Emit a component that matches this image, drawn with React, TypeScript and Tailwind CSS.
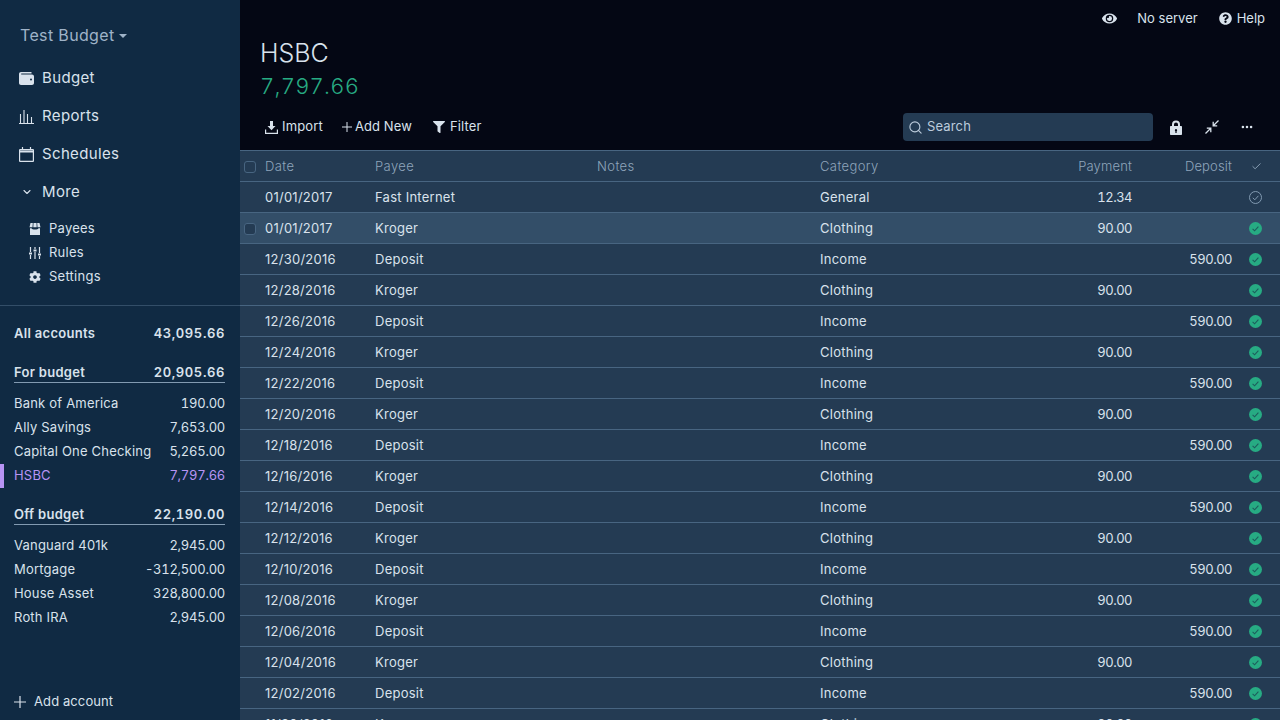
import { ChevronDown, Search, Check, MoreHorizontal } from 'lucide-react';
import { FaEye, FaQuestionCircle, FaFilter, FaCog } from 'react-icons/fa';

const font = { fontFamily: 'Inter, sans-serif' };

const rows: [string, string, string, string, string, boolean][] = [
    ['01/01/2017', 'Fast Internet', 'General', '12.34', '', false],
    ['01/01/2017', 'Kroger', 'Clothing', '90.00', '', true],
    ['12/30/2016', 'Deposit', 'Income', '', '590.00', true],
    ['12/28/2016', 'Kroger', 'Clothing', '90.00', '', true],
    ['12/26/2016', 'Deposit', 'Income', '', '590.00', true],
    ['12/24/2016', 'Kroger', 'Clothing', '90.00', '', true],
    ['12/22/2016', 'Deposit', 'Income', '', '590.00', true],
    ['12/20/2016', 'Kroger', 'Clothing', '90.00', '', true],
    ['12/18/2016', 'Deposit', 'Income', '', '590.00', true],
    ['12/16/2016', 'Kroger', 'Clothing', '90.00', '', true],
    ['12/14/2016', 'Deposit', 'Income', '', '590.00', true],
    ['12/12/2016', 'Kroger', 'Clothing', '90.00', '', true],
    ['12/10/2016', 'Deposit', 'Income', '', '590.00', true],
    ['12/08/2016', 'Kroger', 'Clothing', '90.00', '', true],
    ['12/06/2016', 'Deposit', 'Income', '', '590.00', true],
    ['12/04/2016', 'Kroger', 'Clothing', '90.00', '', true],
    ['12/02/2016', 'Deposit', 'Income', '', '590.00', true],
    ['11/30/2016', 'Kroger', 'Clothing', '90.00', '', true],
];

const WalletIcon = () => (
    <svg width="15" height="13" viewBox="0 0 15 13" fill="currentColor">
        <path d="M2 0h10.500v1.500H2.500c-.6 0-.6 1 0 1H13c1.100 0 2 .9 2 2V11c0 1.100-.9 2-2 2H2c-1.100 0-2-.9-2-2V2C0 .9.900 0 2 0z" />
        <circle cx="12" cy="7.500" r="1" fill="#102a43" />
    </svg>
);

const ReportsIcon = () => (
    <svg width="15" height="15" viewBox="0 0 15 15" fill="none" stroke="currentColor" strokeWidth="1.100">
        <path d="M0 14.500h15M1.500 14V5M5 14V1M8.500 14V5M12.500 14V8" />
    </svg>
);

const CalendarIcon = () => (
    <svg width="15" height="15" viewBox="0 0 15 15" fill="none" stroke="currentColor" strokeWidth="1.200">
        <rect x="0.600" y="2.600" width="13.800" height="11.800" rx="0.500" />
        <path d="M0.600 4.500h13.800" strokeWidth="2" />
        <path d="M3.500 0v3M11.500 0v3" />
    </svg>
);

const StoreIcon = () => (
    <svg width="12" height="12" viewBox="0 0 12 12" fill="currentColor">
        <path d="M1.500 0h2.300l-.3 4.200H0.500zM4.500 0h3l.2 4.200H4.300zM8.200 0h2.300l1 4.200h-3z" />
        <path d="M1 5.200h1.500c0 1.700 7 1.700 7 0H11V12H1z" />
    </svg>
);

const RulesIcon = () => (
    <svg width="12" height="12" viewBox="0 0 12 12" fill="none" stroke="currentColor" strokeWidth="1.200">
        <path d="M1.500 0v5M1.500 8v4M6 0v2M6 5v7M10.500 0v6M10.500 9v3" />
        <path d="M0 6.500h3M4.500 3.500h3M9 7.500h3" strokeWidth="1.800" />
    </svg>
);

const ImportIcon = () => (
    <svg width="13" height="13" viewBox="0 0 13 13" fill="currentColor">
        <path d="M5 0h3v5h2.500l-4 4.200-4-4.200H5z" />
        <path d="M0 8.500h1.200v3.200h10.600V8.500H13V13H0z" />
    </svg>
);

const CollapseIcon = () => (
    <svg width="14" height="14" viewBox="0 0 14 14" fill="none" stroke="currentColor" strokeWidth="1.300">
        <path d="M13.500 0.500L8.500 5.500M8.200 1.800V5.800H12.200" />
        <path d="M0.500 13.500L5.500 8.500M1.800 8.200H5.800V12.200" />
    </svg>
);

const LockIcon = () => (
    <svg width="14" height="15" viewBox="0 0 14 15" fill="currentColor">
        <path fillRule="evenodd" d="M3 6V4.500a4 4 0 0 1 8 0V6h1c.6 0 1 .4 1 1v7c0 .6-.4 1-1 1H2c-.6 0-1-.4-1-1V7c0-.6.400-1 1-1zm2 0h4V4.500a2 2 0 0 0-4 0zm2 3a1.200 1.200 0 0 0-.6 2.200V13h1.200v-1.800A1.200 1.200 0 0 0 7 9z" />
    </svg>
);

const PlusIcon = ({ size }: { size: number }) => (
    <svg width={size} height={size} viewBox="0 0 12 12" fill="none" stroke="currentColor" strokeWidth="1.200">
        <path d="M6 0v12M0 6h12" />
    </svg>
);

const NavItem = ({ icon, label }: { icon: React.ReactNode; label: string }) => (
    <div className="flex items-center h-[38px] pl-[19px] text-[15px] text-[#d9e2ec] tracking-[0.35px]">
        <span className="w-[15px] flex justify-center shrink-0">{icon}</span>
        <span className="ml-2">{label}</span>
    </div>
);

const SubItem = ({ icon, label }: { icon: React.ReactNode; label: string }) => (
    <div className="flex items-center h-6 pl-[29px] text-[13px] text-[#d9e2ec] tracking-[0.25px]">
        <span className="w-3 flex justify-center shrink-0">{icon}</span>
        <span className="ml-2">{label}</span>
    </div>
);

const Account = ({ name, value, active }: { name: string; value: string; active?: boolean }) => (
    <div className={`relative flex justify-between items-center h-6 pl-3.5 pr-[15px] text-[13px] tracking-[0.2px] ${active ? 'text-[#b794f4]' : 'text-[#d9e2ec]'}`}>
        {active && <div className="absolute left-0 top-0 bottom-0 w-1 bg-[#b794f4]"></div>}
        <span>{name}</span>
        <span className="tabular-nums tracking-[-0.25px]">{value}</span>
    </div>
);

const Group = ({ name, value }: { name: string; value: string }) => (
    <div className="mt-[17px] ml-3.5 mr-[15px] h-[20px] flex justify-between items-center border-b border-[#829ab1] text-[13px] font-semibold text-[#d9e2ec] tracking-[0.3px]">
        <span>{name}</span>
        <span className="tabular-nums tracking-[0.6px]">{value}</span>
    </div>
);

const Sidebar = () => (
    <div className="w-[240px] shrink-0 h-[720px] bg-[#102a43] flex flex-col">
        <div className="flex items-center h-[59px] shrink-0 pl-5 pt-[11px] text-[16px] text-[#9fb3c8] tracking-[0.35px]">
            Test Budget
            <svg width="8" height="4" viewBox="0 0 8 4" fill="currentColor" className="ml-[4px] mt-[1px]"><path d="M0 0h8L4 4z" /></svg>
        </div>
        <div>
            <NavItem icon={<WalletIcon />} label="Budget" />
            <NavItem icon={<ReportsIcon />} label="Reports" />
            <NavItem icon={<CalendarIcon />} label="Schedules" />
            <NavItem icon={<ChevronDown size={12} strokeWidth={2.2} />} label="More" />
        </div>
        <div className="pt-[6px] pb-[16px] border-b border-[#334e68]">
            <SubItem icon={<StoreIcon />} label="Payees" />
            <SubItem icon={<RulesIcon />} label="Rules" />
            <SubItem icon={<FaCog size={12} />} label="Settings" />
        </div>
        <div className="flex justify-between items-center h-6 mt-4 pl-3.5 pr-[15px] text-[13px] font-semibold text-[#d9e2ec] tracking-[0.3px]">
            <span>All accounts</span>
            <span className="tabular-nums tracking-[0.6px]">43,095.66</span>
        </div>
        <Group name="For budget" value="20,905.66" />
        <div className="mt-[9px]">
            <Account name="Bank of America" value="190.00" />
            <Account name="Ally Savings" value="7,653.00" />
            <Account name="Capital One Checking" value="5,265.00" />
            <Account name="HSBC" value="7,797.66" active />
        </div>
        <Group name="Off budget" value="22,190.00" />
        <div className="mt-[9px]">
            <Account name="Vanguard 401k" value="2,945.00" />
            <Account name="Mortgage" value="-312,500.00" />
            <Account name="House Asset" value="328,800.00" />
            <Account name="Roth IRA" value="2,945.00" />
        </div>
        <div className="mt-auto h-[36px] flex items-center pl-3.5 text-[13px] text-[#d9e2ec] tracking-[0.1px]">
            <PlusIcon size={12} />
            <span className="ml-2">Add account</span>
        </div>
    </div>
);

const Row = ({ row, hover }: { row: (typeof rows)[number]; hover: boolean }) => (
    <div className={`flex items-center h-[31px] pt-px shrink-0 border-b border-[#486581] text-[13px] text-[#d9e2ec] tracking-[0.25px] ${hover ? 'bg-[#334e68]' : ''}`}>
        <div className="w-[25px] pl-[4px] shrink-0">
            {hover && <div className="w-3 h-3 rounded-[3px] bg-[#243b53] border border-[#486581]"></div>}
        </div>
        <div className="w-[110px] shrink-0">{row[0]}</div>
        <div className="w-[222px] shrink-0">{row[1]}</div>
        <div className="w-[223px] shrink-0"></div>
        <div className="w-[212px] shrink-0">{row[2]}</div>
        <div className="w-[100px] shrink-0 text-right tabular-nums tracking-[-0.5px]">{row[3]}</div>
        <div className="w-[100px] shrink-0 text-right tabular-nums tracking-[-0.5px]">{row[4]}</div>
        <div className="flex-1 flex justify-center pr-px">
            {row[5] ? (
                <svg width="13" height="13" viewBox="0 0 13 13" fill="none">
                    <circle cx="6.500" cy="6.500" r="6.500" fill="#27ab83" />
                    <path d="M3.600 6.800l2 2 3.800-4.200" stroke="#1d5c5c" strokeWidth="1.100" />
                </svg>
            ) : (
                <svg width="13" height="13" viewBox="0 0 13 13" fill="none" stroke="#829ab1" strokeWidth="1">
                    <circle cx="6.500" cy="6.500" r="6" />
                    <path d="M3.800 6.800l2 2 3.600-4" />
                </svg>
            )}
        </div>
    </div>
);

const Header = () => (
    <div className="flex items-center h-[32px] pt-px shrink-0 border-y border-[#486581] text-[13px] font-light text-[#8fa5bb] tracking-[0.4px]">
        <div className="w-[25px] pl-[4px] shrink-0">
            <div className="w-3 h-3 rounded-[3px] border border-[#486581]"></div>
        </div>
        <div className="w-[110px] shrink-0">Date</div>
        <div className="w-[222px] shrink-0">Payee</div>
        <div className="w-[223px] shrink-0">Notes</div>
        <div className="w-[212px] shrink-0">Category</div>
        <div className="w-[100px] shrink-0 text-right tracking-[0.15px]">Payment</div>
        <div className="w-[100px] shrink-0 text-right tracking-[0.15px]">Deposit</div>
        <div className="flex-1 flex justify-center">
            <Check size={11} />
        </div>
    </div>
);

export default function App() {
    return (
        <div className="flex w-[1280px] h-[720px] overflow-hidden bg-[#040714]" style={font}>
            <Sidebar />
            <div className="flex-1 flex flex-col min-w-0">
                <div className="flex justify-end items-center h-[37px] pr-[15px] text-[13px] text-[#d9e2ec]">
                    <FaEye size={15} />
                    <span className="ml-[20px]">No server</span>
                    <FaQuestionCircle size={13} className="ml-[21px]" />
                    <span className="ml-[5px]">Help</span>
                </div>
                <div className="pl-5 text-[25px] font-light leading-[32px] text-[#d9e2ec] h-[32px]">HSBC</div>
                <div className="pl-5 text-[22px] font-light leading-[34px] text-[#27ab83] tabular-nums tracking-[0.25px] h-[34px]">7,797.66</div>
                <div className="flex items-center h-[28px] mt-[10px] pl-[25px] text-[13px] text-[#d9e2ec] tracking-[0.15px]">
                    <ImportIcon />
                    <span className="ml-1">Import</span>
                    <span className="ml-[19px]"><PlusIcon size={10} /></span>
                    <span className="ml-[3px] tracking-[0.1px]">Add New</span>
                    <FaFilter size={12} className="ml-[21px]" />
                    <span className="ml-[5px]">Filter</span>
                    <div className="ml-auto w-[250px] h-[28px] flex items-center pl-[5px] rounded-[4px] bg-[#243b53]">
                        <Search size={15} className="text-[#bcccdc]" strokeWidth={1.8} />
                        <span className="ml-[4px] text-[#bcccdc]">Search</span>
                    </div>
                    <span className="ml-4"><LockIcon /></span>
                    <span className="ml-[22px]"><CollapseIcon /></span>
                    <MoreHorizontal size={14} className="ml-[21px] mr-[26px]" strokeWidth={2.4} />
                </div>
                <div className="flex-1 flex flex-col mt-[9px] bg-[#243b53] overflow-hidden">
                    <Header />
                    {rows.map((row, i) => (
                        <Row key={i} row={row} hover={i === 1} />
                    ))}
                </div>
            </div>
        </div>
    );
}
